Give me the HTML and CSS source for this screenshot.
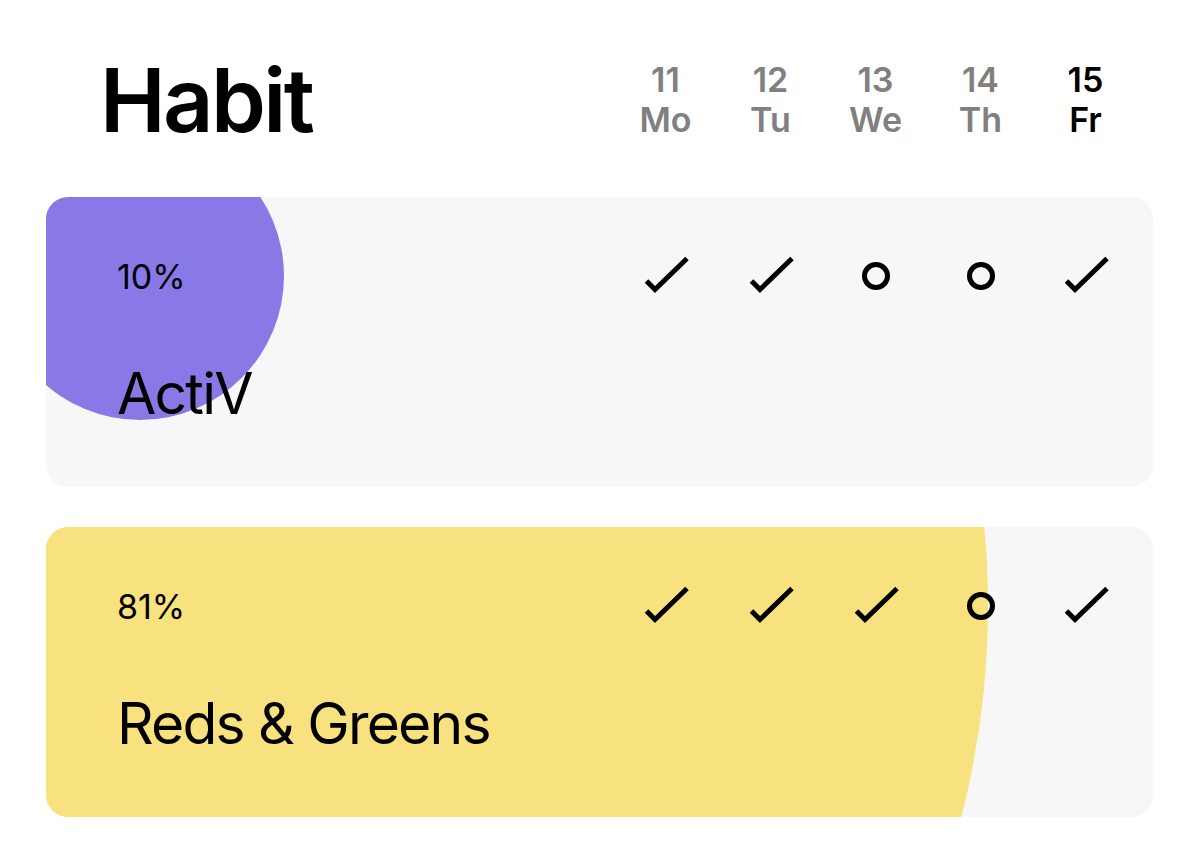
FILE: index.html
```html
<!DOCTYPE html>
<html lang="en">
<head>
<meta charset="utf-8">
<title>Habit</title>
<link rel="stylesheet" href="styles.css">
</head>
<body>
<header class="header">
  <h1 class="title">Habit</h1>
  <div class="days">
    <div class="day"><span class="num">11</span><span class="dow">Mo</span></div>
    <div class="day"><span class="num">12</span><span class="dow">Tu</span></div>
    <div class="day"><span class="num">13</span><span class="dow">We</span></div>
    <div class="day"><span class="num">14</span><span class="dow">Th</span></div>
    <div class="day today"><span class="num">15</span><span class="dow">Fr</span></div>
  </div>
</header>

<main class="list">
  <section class="card">
    <div class="blob blob-purple" style="width:288px;height:288px;left:-50px;top:-65px"></div>
    <div class="row">
      <span class="pct">10%</span>
      <div class="marks">
        <svg class="mark" viewBox="0 0 50 40"><path d="M5.5 25 L14 33.5 L46 2.5" /></svg>
        <svg class="mark" viewBox="0 0 50 40"><path d="M5.5 25 L14 33.5 L46 2.5" /></svg>
        <svg class="mark" viewBox="0 0 50 40"><circle cx="25" cy="20" r="11.5" /></svg>
        <svg class="mark" viewBox="0 0 50 40"><circle cx="25" cy="20" r="11.5" /></svg>
        <svg class="mark" viewBox="0 0 50 40"><path d="M5.5 25 L14 33.5 L46 2.5" /></svg>
      </div>
    </div>
    <div class="name">ActiV</div>
  </section>

  <section class="card">
    <div class="blob blob-yellow" style="width:1696px;height:1696px;left:-754px;top:-769px"></div>
    <div class="row">
      <span class="pct">81%</span>
      <div class="marks">
        <svg class="mark" viewBox="0 0 50 40"><path d="M5.5 25 L14 33.5 L46 2.5" /></svg>
        <svg class="mark" viewBox="0 0 50 40"><path d="M5.5 25 L14 33.5 L46 2.5" /></svg>
        <svg class="mark" viewBox="0 0 50 40"><path d="M5.5 25 L14 33.5 L46 2.5" /></svg>
        <svg class="mark" viewBox="0 0 50 40"><circle cx="25" cy="20" r="11.5" /></svg>
        <svg class="mark" viewBox="0 0 50 40"><path d="M5.5 25 L14 33.5 L46 2.5" /></svg>
      </div>
    </div>
    <div class="name">Reds &amp; Greens</div>
  </section>
</main>
</body>
</html>
```

FILE: styles.css
```css
* { box-sizing: border-box; }

html, body {
  margin: 0;
  padding: 0;
  background: #ffffff;
}

body {
  font-family: Inter, "Noto Sans", "Liberation Sans", sans-serif;
  color: #000;
  width: 1200px;
  height: 856px;
  overflow: hidden;
}

.header {
  display: flex;
  justify-content: space-between;
  align-items: flex-end;
  padding: 0 62px 57px 100px;
  height: 197px;
}

.title {
  margin: 0 0 -4px 0;
  font-size: 88px;
  font-weight: 600;
  line-height: 1;
  letter-spacing: -2.6px;
}

.days {
  display: grid;
  grid-template-columns: repeat(5, 105px);
}

.day {
  display: flex;
  flex-direction: column;
  align-items: center;
  font-size: 34px;
  font-weight: 600;
  line-height: 40px;
  color: #808080;
}

.day.today { color: #000; }

.list {
  display: flex;
  flex-direction: column;
  gap: 40px;
  padding: 0 47px 0 46px;
}

.card {
  position: relative;
  overflow: hidden;
  height: 290px;
  background: #f7f7f7;
  border-radius: 22px;
  padding: 0 15px 0 71px;
}

.blob {
  position: absolute;
  border-radius: 50%;
}

.blob-purple { background: #8879e6; }
.blob-yellow { background: #f8e27f; }

.row {
  position: relative;
  display: flex;
  justify-content: space-between;
  align-items: center;
  height: 158px;
}

.pct {
  font-size: 34px;
  font-weight: 400;
}

.marks {
  display: grid;
  grid-template-columns: repeat(5, 105px);
  justify-items: center;
}

.mark {
  width: 50px;
  height: 40px;
  fill: none;
  stroke: #000;
  stroke-width: 5;
}

.name {
  position: relative;
  font-size: 57px;
  font-weight: 400;
  line-height: 1;
  margin-top: 10px;
  letter-spacing: -1.8px;
}
```
